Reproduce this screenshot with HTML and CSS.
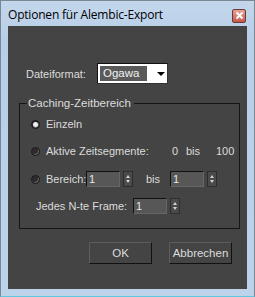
FILE: index.html
```html
<!DOCTYPE html>
<html lang="de">
<head>
  <meta charset="UTF-8">
  <title>Optionen für Alembic-Export</title>
  <link rel="stylesheet" href="styles.css">
</head>
<body>

  <div class="window">
    <!-- Titelleiste -->
    <div class="titlebar">
      <span class="title">Optionen für Alembic-Export</span>
      <span class="close">
        <svg width="9" height="9" viewBox="0 0 9 9"><path d="M1.5 1.5 L7.5 7.5 M7.5 1.5 L1.5 7.5" stroke="#fff" stroke-width="2"/></svg>
      </span>
    </div>

    <!-- Inhalt -->
    <div class="client">
      <div class="row format">
        <span class="label">Dateiformat:</span>
        <div class="dropdown">
          <span class="selected">Ogawa</span>
          <span class="arrow"></span>
        </div>
      </div>

      <div class="group">
        <span class="legend">Caching-Zeitbereich</span>

        <div class="row opt single">
          <span class="radio checked"></span>
          <span>Einzeln</span>
        </div>

        <div class="row opt active">
          <span class="radio"></span>
          <span class="segtext">Aktive Zeitsegmente:</span>
          <span class="num0">0</span>
          <span class="bis">bis</span>
          <span>100</span>
        </div>

        <div class="row opt range">
          <span class="radio"></span>
          <span class="rangelabel">Bereich:</span>
          <div class="spinner">
            <span class="field">1</span>
            <span class="arrows"><i class="up"></i><i class="down"></i></span>
          </div>
          <span class="bis2">bis</span>
          <div class="spinner">
            <span class="field">1</span>
            <span class="arrows"><i class="up"></i><i class="down"></i></span>
          </div>
        </div>

        <div class="row nth">
          <span class="nthlabel">Jedes N-te Frame:</span>
          <div class="spinner">
            <span class="field">1</span>
            <span class="arrows"><i class="up"></i><i class="down"></i></span>
          </div>
        </div>
      </div>

      <div class="row buttons">
        <button>OK</button>
        <button>Abbrechen</button>
      </div>
    </div>
  </div>

</body>
</html>
```

FILE: styles.css
```css
/* Reset */
* {
  margin: 0;
  padding: 0;
  box-sizing: border-box;
}
body {
  background: #ffffff;
  font-family: 'Liberation Sans', Arial, sans-serif;
}
/* Fensterrahmen */
.window {
  width: 255px;
  height: 297px;
  background: linear-gradient(#c3d6eb, #b8cfe8 40px, #bcd3ea);
  border: 1px solid #7a8794;
  border-bottom-color: #5fc8e0;
  display: flex;
  flex-direction: column;
}
.titlebar {
  height: 25px;
  display: flex;
  align-items: center;
  padding: 2px 8px 0 7px;
}
.title {
  font-family: 'Open Sans', sans-serif;
  font-size: 12px;
  letter-spacing: -0.2px;
  color: #000;
  flex: 1;
}
.close {
  width: 14px;
  height: 14px;
  margin-top: 2px;
  background: linear-gradient(#e5a396, #c8584a);
  border: 1px solid #6b3b3b;
  border-radius: 2px;
  display: flex;
  align-items: center;
  justify-content: center;
}
/* Dunkler Bereich */
.client {
  margin: 0 7px;
  height: 263px;
  background: #444444;
  color: #dcdcdc;
  font-size: 11px;
  padding: 37px 0 0 11px;
}
.row {
  display: flex;
  align-items: center;
  white-space: nowrap;
}
.format .label {
  margin-left: 7px;
  width: 71px;
}
.dropdown {
  width: 71px;
  height: 21px;
  border: 1px solid #111;
  border-right-color: #333;
  border-bottom-color: #333;
  background: #fff;
  padding: 2px;
  display: flex;
  align-items: center;
}
.selected {
  background: #5a5a5a;
  color: #f0f0f0;
  width: 48px;
  height: 15px;
  line-height: 15px;
  padding-left: 3px;
  font-size: 11.5px;
}
.arrow {
  margin-left: 10px;
  width: 0;
  height: 0;
  border-left: 4px solid transparent;
  border-right: 4px solid transparent;
  border-top: 4px solid #000;
}
/* Gruppe */
.group {
  width: 221px;
  height: 126px;
  margin-top: 19px;
  border: 1px solid #161616;
  padding: 0 0 0 11px;
  display: flex;
  flex-direction: column;
  align-items: flex-start;
}
.legend {
  height: 12px;
  line-height: 12px;
  margin: -7px 0 0 -4px;
  padding: 0 3px 0 1px;
  background: #444444;
  font-size: 11.5px;
}
.opt .radio {
  margin-right: 6px;
}
.radio {
  width: 9px;
  height: 9px;
  border-radius: 50%;
  background: #2c2c2c;
  border: 1px solid #1a1a1a;
  box-shadow: inset -1px -1px 0 #6a6a6a;
  display: inline-flex;
  align-items: center;
  justify-content: center;
}
.radio.checked::after {
  content: "";
  width: 5px;
  height: 5px;
  border-radius: 50%;
  background: #f0f0f0;
}
.single {
  margin-top: 8px;
  height: 14px;
}
.active {
  margin-top: 13px;
  height: 14px;
}
.segtext {
  width: 126px;
}
.num0 {
  width: 14px;
}
.bis {
  width: 30px;
}
.range {
  margin-top: 13px;
  height: 16px;
}
.rangelabel {
  width: 40px;
}
.bis2 {
  margin-left: 13px;
  width: 24px;
}
.spinner {
  display: flex;
  align-items: center;
  gap: 3px;
}
.field {
  width: 34px;
  height: 16px;
  background: #575757;
  border-top: 1px solid #111;
  border-left: 1px solid #111;
  border-right: 1px solid #666;
  border-bottom: 1px solid #666;
  line-height: 14px;
  padding-left: 2px;
  color: #e8e8e8;
}
.arrows {
  width: 10px;
  height: 16px;
  background: #4a4a4a;
  border: 1px solid #2e2e2e;
  display: flex;
  flex-direction: column;
  align-items: center;
  justify-content: space-around;
  padding: 2px 0;
}
.arrows i {
  width: 0;
  height: 0;
  border-left: 2.5px solid transparent;
  border-right: 2.5px solid transparent;
}
.arrows .up {
  border-bottom: 3px solid #d0d0d0;
}
.arrows .down {
  border-top: 3px solid #d0d0d0;
}
.nth {
  margin-top: 11px;
  padding-left: 5px;
  height: 16px;
}
.nthlabel {
  width: 97px;
}
/* Knöpfe */
.buttons {
  margin-top: 13px;
  padding-left: 70px;
  gap: 17px;
}
button {
  width: 63px;
  height: 22px;
  background: #444444;
  color: #dcdcdc;
  font-family: 'Liberation Sans', Arial, sans-serif;
  font-size: 11.5px;
  border: 1px solid #111;
  border-top-color: #5c5c5c;
  border-left-color: #5c5c5c;
}
```
